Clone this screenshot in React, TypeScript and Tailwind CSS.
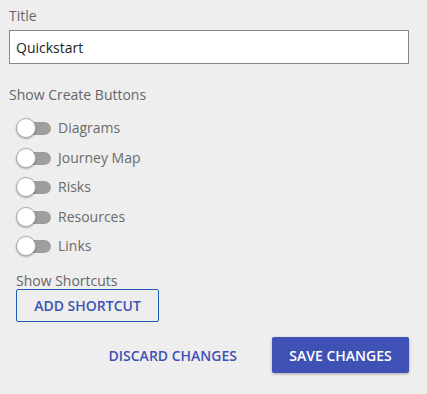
export default function App() {
  const toggles = ["Diagrams", "Journey Map", "Risks", "Resources", "Links"]
  return (
    <div className="h-[394px] w-[427px] bg-[#eeeeee] font-['Open_Sans',sans-serif] text-[#666666]">
      <div className="px-[9px] pt-[6px]">
        <label className="block text-[14px] leading-[20px]">Title</label>
        <div className="mt-[4px] flex h-[34px] w-[400px] items-center border border-[#888888] bg-white px-[6px] text-[14px] text-[#222222]">
          Quickstart
        </div>
        <div className="mt-[21px] text-[14px] leading-[20px]">Show Create Buttons</div>
      </div>
      <div className="mt-[13px] flex flex-col gap-[9.5px] pl-[16px]">
        {toggles.map((t) => (
          <div key={t} className="flex h-[20px] items-center">
            <div className="relative h-[20px] w-[36px]">
              <div className="absolute left-[4px] top-[4px] h-[13px] w-[31px] rounded-full bg-[#9e9e9e]" />
              <div className="absolute left-0 top-0 h-[20px] w-[20px] rounded-full border border-[#aaaaaa] bg-white shadow-[0_1px_2px_rgba(0,0,0,0.3)]" />
            </div>
            <span className="ml-[6px] text-[14px] leading-[20px] text-[#6b6b6b]">{t}</span>
          </div>
        ))}
      </div>
      <div className="mt-[16px] pl-[16px]">
        <div className="text-[14px] leading-[17px]">Show Shortcuts</div>
        <button className="h-[33px] w-[143px] rounded-[2px] border border-[#1e5bb8] text-[14px] font-semibold text-[#3f51b5]">
          ADD SHORTCUT
        </button>
      </div>
      <div className="mt-[15px] flex items-center justify-end gap-[35px] pr-[18px]">
        <button className="text-[14px] font-semibold text-[#3f51b5]">DISCARD CHANGES</button>
        <button className="h-[36px] w-[137px] rounded-[2px] bg-[#3f51b5] text-[14px] font-semibold text-white shadow-[0_1px_3px_rgba(0,0,0,0.3)]">
          SAVE CHANGES
        </button>
      </div>
    </div>
  )
}
